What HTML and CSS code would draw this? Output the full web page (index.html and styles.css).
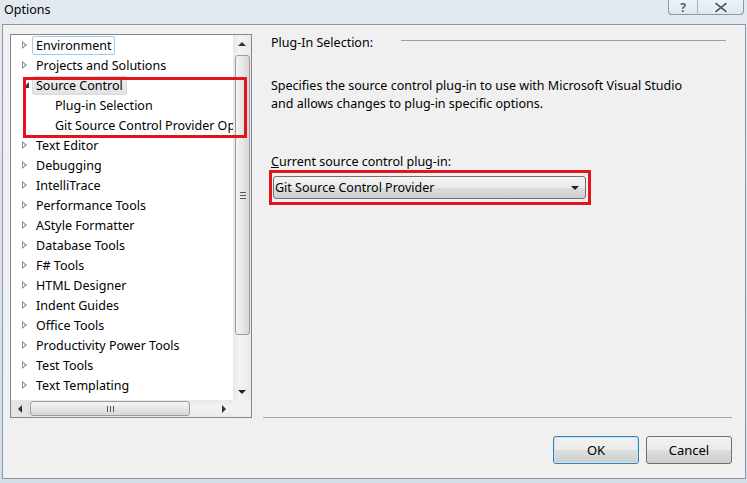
FILE: index.html
```html
<!DOCTYPE html>
<html lang="en">
<head>
  <meta charset="UTF-8">
  <title>Options</title>
  <link rel="stylesheet" href="styles.css">
</head>
<body>
  <div class="window">
    <div class="titlebar">
      <span class="title">Options</span>
      <div class="caption">
        <span class="cap-btn help">?</span>
        <span class="cap-btn close">
          <svg width="14" height="11" viewBox="0 0 14 11">
            <path d="M2 1.5 L12 9.5 M12 1.5 L2 9.5" stroke="#fff" stroke-width="4" stroke-linecap="round"/>
            <path d="M2 1.5 L12 9.5 M12 1.5 L2 9.5" stroke="#56616e" stroke-width="2" stroke-linecap="round"/>
          </svg>
        </span>
      </div>
    </div>

    <div class="client">
      <div class="main">
        <!-- arbre des catégories -->
        <div class="tree">
          <div class="tree-body">
            <ul class="tree-list">
              <li class="row"><span class="twisty closed"></span><span class="label focused">Environment</span></li>
              <li class="row"><span class="twisty closed"></span><span class="label">Projects and Solutions</span></li>
              <li class="row"><span class="twisty open"></span><span class="label selected">Source Control</span></li>
              <li class="row child"><span class="twisty"></span><span class="label">Plug-in Selection</span></li>
              <li class="row child"><span class="twisty"></span><span class="label">Git Source Control Provider Options</span></li>
              <li class="row"><span class="twisty closed"></span><span class="label">Text Editor</span></li>
              <li class="row"><span class="twisty closed"></span><span class="label">Debugging</span></li>
              <li class="row"><span class="twisty closed"></span><span class="label">IntelliTrace</span></li>
              <li class="row"><span class="twisty closed"></span><span class="label">Performance Tools</span></li>
              <li class="row"><span class="twisty closed"></span><span class="label">AStyle Formatter</span></li>
              <li class="row"><span class="twisty closed"></span><span class="label">Database Tools</span></li>
              <li class="row"><span class="twisty closed"></span><span class="label">F# Tools</span></li>
              <li class="row"><span class="twisty closed"></span><span class="label">HTML Designer</span></li>
              <li class="row"><span class="twisty closed"></span><span class="label">Indent Guides</span></li>
              <li class="row"><span class="twisty closed"></span><span class="label">Office Tools</span></li>
              <li class="row"><span class="twisty closed"></span><span class="label">Productivity Power Tools</span></li>
              <li class="row"><span class="twisty closed"></span><span class="label">Test Tools</span></li>
              <li class="row"><span class="twisty closed"></span><span class="label">Text Templating</span></li>
            </ul>
            <div class="vscroll">
              <div class="sb-btn"><span class="arr up"></span></div>
              <div class="vthumb"><span class="grip-h"></span></div>
              <div class="sb-fill"></div>
              <div class="sb-btn"><span class="arr down"></span></div>
            </div>
          </div>
          <div class="hscroll-row">
            <div class="hscroll">
              <div class="sb-btn hbtn pressed"><span class="arr left"></span></div>
              <div class="hthumb"><span class="grip-v"></span></div>
              <div class="sb-fill"></div>
              <div class="sb-btn hbtn"><span class="arr right"></span></div>
            </div>
            <div class="corner"></div>
          </div>
          <div class="mark tree-mark"></div>
        </div>

        <!-- page de droite -->
        <div class="page">
          <div class="group-head">
            <span class="group-title">Plug-In Selection:</span>
            <span class="rule"></span>
          </div>
          <p class="desc">Specifies the source control plug-in to use with Microsoft Visual Studio<br>and allows changes to plug-in specific options.</p>
          <label class="field-label"><u>C</u>urrent source control plug-in:</label>
          <div class="mark-box">
            <div class="select">
              <span>Git Source Control Provider</span>
              <span class="arr down"></span>
            </div>
          </div>
          <div class="sep"></div>
        </div>
      </div>

      <div class="buttons">
        <button class="btn default">OK</button>
        <button class="btn">Cancel</button>
      </div>
    </div>
  </div>
</body>
</html>
```

FILE: styles.css
```css
* {
  box-sizing: border-box;
}
body {
  margin: 0;
  font-family: "Noto Sans", "Liberation Sans", sans-serif;
  font-size: 12.5px;
  color: #000;
  background: #d9e3ee;
}
.window {
  width: 747px;
  height: 483px;
  background: linear-gradient(#e2e9f1, #d3dee9);
  overflow: hidden;
}
.titlebar {
  height: 24px;
  display: flex;
  justify-content: space-between;
  align-items: flex-start;
}
.title {
  padding: 1px 0 0 4px;
  font-size: 12.5px;
  line-height: 18px;
}
.caption {
  display: flex;
  margin-right: 3px;
}
.cap-btn {
  height: 15px;
  display: flex;
  align-items: center;
  justify-content: center;
  border: 1px solid #8a98a8;
  border-top: none;
  background: linear-gradient(#eef2f7, #dfe7ef);
}
.help {
  width: 29px;
  border-right: none;
  border-radius: 0 0 0 4px;
  font-weight: bold;
  font-size: 12px;
  color: #56616e;
  text-shadow: 0 0 1px #fff;
}
.close {
  width: 47px;
  border-radius: 0 0 4px 0;
  border-left: 1px solid #a4b1bf;
}
.client {
  margin-left: 2px;
  width: 744px;
  height: 455px;
  border: 1px solid #8b97a4;
  background: #f0f0f0;
}
.main {
  display: flex;
  margin-top: 9px;
  height: 384px;
}
.tree {
  position: relative;
  margin-left: 7px;
  width: 242px;
  height: 384px;
  border: 1px solid #828790;
  background: #fff;
}
.tree-body {
  display: flex;
  height: 365px;
}
.tree-list {
  list-style: none;
  margin: 0;
  padding: 0;
  width: 222px;
  overflow: hidden;
}
.row {
  height: 20px;
  display: flex;
  align-items: flex-start;
  padding-left: 9px;
  white-space: nowrap;
}
.row.child {
  padding-left: 28px;
}
.twisty {
  width: 12px;
  height: 20px;
  flex: none;
  position: relative;
}
.twisty.closed::before {
  content: "";
  position: absolute;
  left: 2px;
  top: 6px;
  border-left: 5px solid #8f8f8f;
  border-top: 4px solid transparent;
  border-bottom: 4px solid transparent;
}
.twisty.closed::after {
  content: "";
  position: absolute;
  left: 3px;
  top: 8px;
  border-left: 2px solid #fff;
  border-top: 2px solid transparent;
  border-bottom: 2px solid transparent;
}
.twisty.open::before {
  content: "";
  position: absolute;
  left: 3px;
  top: 7px;
  border-right: 6px solid #3c3c3c;
  border-top: 6px solid transparent;
}
.label {
  margin-top: 1px;
  height: 19px;
  line-height: 17px;
  padding: 0 3px;
  border: 1px solid transparent;
  border-radius: 2px;
}
.label.focused {
  border-color: #9fcbef;
  background: #fcfdfe;
}
.label.selected {
  border-color: #dadada;
  background: linear-gradient(#f0f0f0, #e2e2e2);
}
.vscroll {
  width: 18px;
  display: flex;
  flex-direction: column;
  background: linear-gradient(90deg, #e8e8e8, #f3f3f3 40%, #eaeaea);
}
.sb-btn {
  height: 17px;
  flex: none;
  display: flex;
  align-items: center;
  justify-content: center;
}
.hbtn {
  width: 18px;
}
.hbtn.pressed {
  background: #e4e4e4;
  border-right: 1px solid #d6d6d6;
}
.sb-fill {
  flex: 1;
}
.vthumb {
  margin: 3px 1px 0 2px;
  height: 280px;
  border: 1px solid #9c9c9c;
  border-radius: 3px;
  background: linear-gradient(90deg, #f5f5f5, #e6e6e6 50%, #d6d6d6);
  display: flex;
  align-items: center;
  justify-content: center;
}
.grip-h {
  width: 6px;
  height: 7px;
  border-top: 1px solid #555;
  border-bottom: 1px solid #555;
  background: linear-gradient(transparent 2px, #555 2px, #555 3px, transparent 3px);
}
.hscroll-row {
  display: flex;
  height: 17px;
}
.hscroll {
  width: 222px;
  display: flex;
  background: linear-gradient(#e8e8e8, #f3f3f3 40%, #eaeaea);
}
.hthumb {
  margin: 1px 0 1px 1px;
  width: 160px;
  border: 1px solid #9c9c9c;
  border-radius: 3px;
  background: linear-gradient(#f5f5f5, #e6e6e6 50%, #d6d6d6);
  display: flex;
  align-items: center;
  justify-content: center;
}
.grip-v {
  width: 7px;
  height: 6px;
  border-left: 1px solid #555;
  border-right: 1px solid #555;
  background: linear-gradient(90deg, transparent 2px, #555 2px, #555 3px, transparent 3px);
}
.corner {
  width: 18px;
  background: #f0f0f0;
}
.arr {
  width: 0;
  height: 0;
}
.arr.up {
  border-bottom: 4px solid #333;
  border-left: 4px solid transparent;
  border-right: 4px solid transparent;
}
.arr.down {
  border-top: 4px solid #222;
  border-left: 4px solid transparent;
  border-right: 4px solid transparent;
}
.arr.left {
  border-right: 4px solid #333;
  border-top: 4px solid transparent;
  border-bottom: 4px solid transparent;
}
.arr.right {
  border-left: 4px solid #333;
  border-top: 4px solid transparent;
  border-bottom: 4px solid transparent;
}
.mark {
  border: 3px solid #e3141b;
}
.tree-mark {
  position: absolute;
  left: 12px;
  top: 42px;
  width: 224px;
  height: 61px;
}
.page {
  flex: 1;
  display: flex;
  flex-direction: column;
  padding-left: 19px;
  margin-right: 13px;
}
.group-head {
  display: flex;
  height: 18px;
  line-height: 18px;
}
.group-title {
  width: 130px;
  flex: none;
}
.rule {
  flex: 1;
  margin: 6px 6px 0 0;
  height: 1px;
  background: #a0a0a0;
}
.desc {
  margin: 25px 0 0;
  line-height: 18px;
}
.field-label {
  margin-top: 40px;
  line-height: 17px;
}
.mark-box {
  margin-left: -2px;
  width: 322px;
  height: 35px;
  padding: 3px 0 0 1px;
  border: 3px solid #e3141b;
}
.select {
  width: 313px;
  height: 23px;
  display: flex;
  align-items: center;
  justify-content: space-between;
  padding: 0 6px 0 1px;
  border: 1px solid #707070;
  border-radius: 3px;
  background: linear-gradient(#f2f2f2, #ebebeb 50%, #dddddd 51%, #cfcfcf);
}
.sep {
  margin: auto 0 0 -8px;
  height: 1px;
  background: #a9a9a9;
}
.buttons {
  display: flex;
  justify-content: flex-end;
  gap: 7px;
  margin: 18px 13px 0 0;
}
.btn {
  width: 86px;
  height: 28px;
  font-family: inherit;
  font-size: 13px;
  color: #000;
  border: 1px solid #707070;
  border-radius: 3px;
  background: linear-gradient(#f2f2f2, #ebebeb 50%, #dddddd 51%, #cfcfcf);
}
.btn.default {
  border-color: #3c7fb1;
  box-shadow: inset 0 0 0 1px #c3e6f8;
}
```
